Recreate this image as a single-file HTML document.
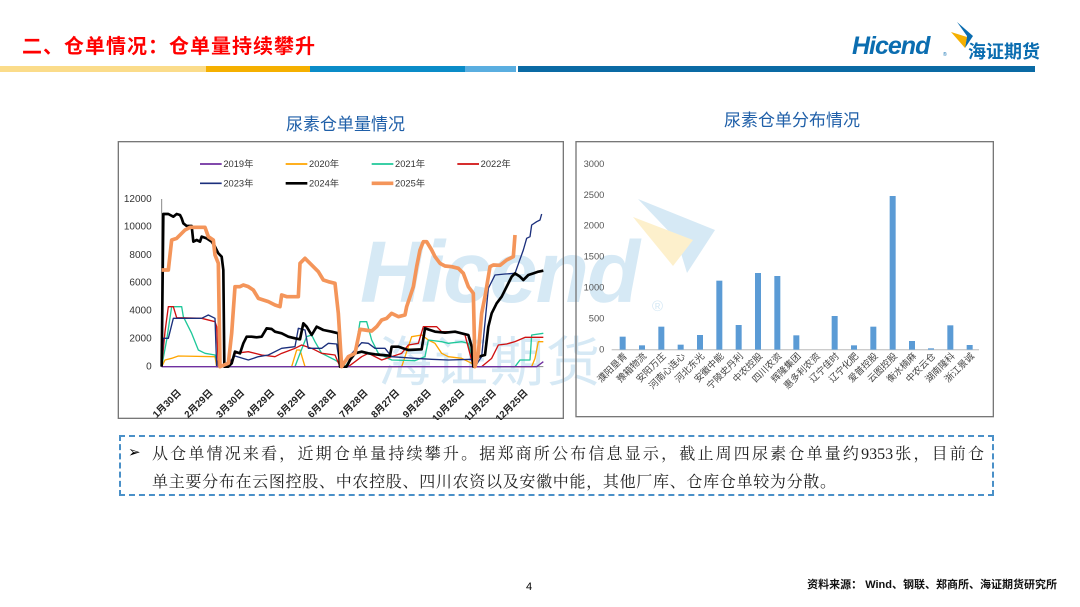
<!DOCTYPE html>
<html><head><meta charset="utf-8"><style>
body{margin:0;width:1080px;height:607px;position:relative;background:#fff;overflow:hidden;font-family:"Liberation Sans","Noto Sans CJK SC",sans-serif}
.abs{position:absolute}
</style></head><body>
<div class="abs" style="left:22px;top:30px;font-size:20px;font-weight:bold;color:#f00;letter-spacing:1px">二、仓单情况：仓单量持续攀升</div>
<!-- logo -->
<div class="abs" style="left:852px;top:32px;font-size:25px;font-weight:bold;font-style:italic;color:#0b6db0;letter-spacing:-1px">Hicend</div>
<div class="abs" style="left:943px;top:52px;font-size:5px;color:#0b6db0">®</div>
<svg class="abs" style="left:945px;top:22px" width="30" height="32"><polygon points="12,0 28,14 20,26 22,14" fill="#0b6db0"/><polygon points="6,10 22,15 20,26" fill="#f5b000"/></svg>
<div class="abs" style="left:968px;top:38px;font-size:18px;font-weight:bold;color:#0b6db0">海证期货</div>
<!-- stripe -->
<div class="abs" style="left:0;top:66px;width:206px;height:6px;background:#fbdc8a"></div>
<div class="abs" style="left:206px;top:66px;width:104px;height:6px;background:#f5b000"></div>
<div class="abs" style="left:310px;top:66px;width:155px;height:6px;background:#0a8cc8"></div>
<div class="abs" style="left:465px;top:66px;width:51px;height:6px;background:#5aaee0"></div>
<div class="abs" style="left:518px;top:66px;width:517px;height:6px;background:#0a6aa4"></div>
<!-- titles -->
<div class="abs" style="left:286px;top:110px;font-size:17px;color:#1f5fa8">尿素仓单量情况</div>
<div class="abs" style="left:724px;top:106px;font-size:17px;color:#1f5fa8">尿素仓单分布情况</div>
<!-- watermark -->
<div class="abs" style="left:360px;top:223px;font-size:87px;font-weight:bold;font-style:italic;color:#d6e9f5;letter-spacing:-2px">Hicend</div>
<div class="abs" style="left:652px;top:298px;font-size:15px;color:#d6e9f5">®</div>
<div class="abs" style="left:378px;top:318px;font-size:54px;color:#d6e9f5;letter-spacing:2px">海证期货</div>
<svg class="abs" style="left:625px;top:195px" width="100" height="90"><polygon points="13,4 90,35 62,78 52,45" fill="#d6e9f5"/><polygon points="8,22 68,45 48,71" fill="#fdf0cc"/></svg>
<!-- left chart -->
<svg class="abs" style="left:115px;top:140px" width="450" height="280" viewBox="0 0 1350 840">
<rect x="10" y="5" width="1335" height="830" fill="none" stroke="#777" stroke-width="4"/>
<g font-size="28" fill="#333" font-family="Liberation Sans,Noto Sans CJK SC,sans-serif">
<line x1="255" y1="72" x2="320" y2="72" stroke="#7030a0" stroke-width="5"/><text x="325" y="81">2019年</text>
<line x1="512" y1="72" x2="577" y2="72" stroke="#ffa500" stroke-width="5"/><text x="582" y="81">2020年</text>
<line x1="770" y1="72" x2="835" y2="72" stroke="#1fc89a" stroke-width="5"/><text x="840" y="81">2021年</text>
<line x1="1027" y1="72" x2="1092" y2="72" stroke="#d01010" stroke-width="5"/><text x="1097" y="81">2022年</text>
<line x1="255" y1="130" x2="320" y2="130" stroke="#1b2f7c" stroke-width="5"/><text x="325" y="139">2023年</text>
<line x1="512" y1="130" x2="577" y2="130" stroke="#000" stroke-width="8"/><text x="582" y="139">2024年</text>
<line x1="770" y1="130" x2="835" y2="130" stroke="#f4955a" stroke-width="11"/><text x="840" y="139">2025年</text>
<g text-anchor="end" font-size="30"><text x="110" y="186">12000</text><text x="110" y="269">10000</text><text x="110" y="354">8000</text><text x="110" y="437">6000</text><text x="110" y="521">4000</text><text x="110" y="605">2000</text><text x="110" y="689">0</text></g>
<g text-anchor="end" font-weight="bold" font-size="29" fill="#222">
<text transform="translate(200,760) rotate(-45)">1月30日</text><text transform="translate(295,760) rotate(-45)">2月29日</text><text transform="translate(390,760) rotate(-45)">3月30日</text><text transform="translate(480,760) rotate(-45)">4月29日</text><text transform="translate(573,760) rotate(-45)">5月29日</text><text transform="translate(665,760) rotate(-45)">6月28日</text><text transform="translate(760,760) rotate(-45)">7月28日</text><text transform="translate(855,760) rotate(-45)">8月27日</text><text transform="translate(950,760) rotate(-45)">9月26日</text><text transform="translate(1050,760) rotate(-45)">10月26日</text><text transform="translate(1145,760) rotate(-45)">11月25日</text><text transform="translate(1240,760) rotate(-45)">12月25日</text></g>
</g>
<line x1="140" y1="177" x2="140" y2="680" stroke="#888" stroke-width="3"/>
<line x1="140" y1="680" x2="1285" y2="680" stroke="#888" stroke-width="3"/>
<g fill="none" stroke-linejoin="round">
<polyline stroke="#ffa500" stroke-width="4" points="140,680 150,660 170,655 190,648 300,650 305,680 530,680 545,630 555,630 570,680 860,680 870,650 890,590 920,585 940,600 960,610 980,640 1000,650 1040,655 1070,670 1080,680 1250,680 1260,655 1270,605 1285,605"/>
<polyline stroke="#1fc89a" stroke-width="4" points="140,680 155,600 170,500 200,500 205,530 230,580 250,630 270,640 300,645 310,680 540,680 555,640 575,590 590,585 600,605 620,640 660,660 690,680 720,640 735,545 755,545 770,600 790,640 830,660 900,662 930,650 940,600 980,605 1000,610 1040,605 1060,610 1075,680 1200,680 1215,660 1245,660 1250,585 1285,580"/>
<polyline stroke="#d01010" stroke-width="4" points="140,680 150,575 160,500 175,500 185,533 260,535 300,545 305,560 310,680 340,680 360,640 400,635 440,645 480,650 500,640 540,625 560,615 590,625 620,640 660,645 675,680 700,680 740,650 760,640 800,660 830,650 860,640 880,615 910,610 925,560 965,560 980,575 1020,575 1050,585 1075,680 1100,680 1130,655 1150,615 1175,612 1200,605 1230,592 1285,592"/>
<polyline stroke="#1b2f7c" stroke-width="4" points="140,680 145,595 160,595 175,535 260,535 280,525 300,535 305,680 330,680 360,648 400,660 430,650 460,645 500,625 540,620 550,565 570,570 580,625 620,625 640,610 665,612 675,680 720,630 740,608 760,610 780,625 810,625 830,650 900,655 950,658 1000,660 1070,658 1080,680 1100,650 1120,445 1140,405 1170,402 1200,400 1215,358 1225,330 1235,295 1245,290 1250,255 1265,245 1275,240 1280,222"/>
<polyline stroke="#7030a0" stroke-width="4" points="140,680 1265,680 1285,665"/>
<polyline stroke="#000" stroke-width="8" points="140,680 145,222 160,222 175,230 185,222 195,225 200,235 205,250 215,258 230,258 235,305 245,300 255,305 260,290 275,295 290,305 300,320 310,340 320,350 325,390 328,680 340,680 350,670 360,635 375,640 385,610 395,590 410,590 425,592 440,590 455,565 470,567 480,575 500,580 520,590 540,595 555,598 565,550 575,560 590,585 605,560 625,570 650,575 670,580 675,680 695,680 705,660 720,640 740,635 760,640 780,643 800,645 825,647 830,620 850,620 870,627 880,630 920,628 930,565 945,570 960,575 990,578 1020,575 1060,585 1070,620 1075,680 1090,650 1110,645 1120,560 1130,520 1145,490 1160,470 1175,440 1190,410 1200,400 1215,410 1225,420 1240,405 1255,400 1270,395 1285,392"/>
<polyline stroke="#f4955a" stroke-width="11" points="140,390 160,390 170,300 185,295 195,285 210,270 225,262 245,262 270,262 280,290 295,300 300,345 310,370 315,680 340,670 350,580 360,440 375,440 385,435 400,440 415,450 430,475 445,480 460,485 480,495 495,500 500,465 515,470 530,470 550,470 555,370 570,355 580,365 595,380 610,395 625,420 640,425 660,430 670,520 680,680 700,650 720,640 735,568 750,570 770,573 785,560 800,540 815,535 830,520 850,530 870,525 875,500 885,470 895,440 905,380 915,330 925,305 935,305 950,330 960,350 975,370 990,378 1010,380 1030,385 1045,400 1060,440 1075,460 1080,680 1090,640 1100,520 1110,470 1125,380 1135,375 1155,376 1175,360 1185,355 1195,350 1200,285"/>
</g>
</svg>
<!-- right chart -->
<svg class="abs" style="left:575px;top:140px" width="420" height="280" viewBox="0 0 1260 840">
<rect x="3" y="5" width="1252" height="825" fill="none" stroke="#777" stroke-width="4"/>
<g font-size="28" fill="#555" text-anchor="end" font-family="Liberation Sans,sans-serif">
<text x="88" y="81">3000</text><text x="88" y="174">2500</text><text x="88" y="266">2000</text><text x="88" y="359">1500</text><text x="88" y="452">1000</text><text x="88" y="544">500</text><text x="88" y="637">0</text></g>
<line x1="110" y1="629" x2="1212" y2="629" stroke="#ccc" stroke-width="4"/>
<g fill="#5b9bd5">
<rect x="134" y="590" width="18" height="39"/><rect x="192" y="616" width="18" height="13"/><rect x="250" y="560" width="18" height="69"/><rect x="308" y="614" width="18" height="15"/><rect x="366" y="585" width="18" height="44"/><rect x="424" y="422" width="18" height="207"/><rect x="482" y="555" width="18" height="74"/><rect x="540" y="399" width="18" height="230"/><rect x="598" y="408" width="18" height="221"/><rect x="655" y="586" width="18" height="43"/><rect x="770" y="528" width="18" height="101"/><rect x="828" y="616" width="18" height="13"/><rect x="886" y="560" width="18" height="69"/><rect x="944" y="168" width="18" height="461"/><rect x="1002" y="603" width="18" height="26"/><rect x="1059" y="625" width="18" height="4"/><rect x="1117" y="556" width="18" height="73"/><rect x="1175" y="615" width="18" height="14"/></g>
<g font-size="28" fill="#444" text-anchor="end" font-family="Liberation Sans,Noto Sans CJK SC,sans-serif">
<text transform="translate(158,650) rotate(-45)">濮阳垦青</text><text transform="translate(216,650) rotate(-45)">豫箱物流</text><text transform="translate(274,650) rotate(-45)">安阳万庄</text><text transform="translate(332,650) rotate(-45)">河南心连心</text><text transform="translate(390,650) rotate(-45)">河北东光</text><text transform="translate(448,650) rotate(-45)">安徽中能</text><text transform="translate(506,650) rotate(-45)">宁陵史丹利</text><text transform="translate(564,650) rotate(-45)">中农控股</text><text transform="translate(622,650) rotate(-45)">四川农资</text><text transform="translate(679,650) rotate(-45)">辉隆集团</text><text transform="translate(737,650) rotate(-45)">惠多利农资</text><text transform="translate(794,650) rotate(-45)">辽宁佳时</text><text transform="translate(852,650) rotate(-45)">辽宁化肥</text><text transform="translate(910,650) rotate(-45)">爱普控股</text><text transform="translate(968,650) rotate(-45)">云图控股</text><text transform="translate(1026,650) rotate(-45)">衡水楠麻</text><text transform="translate(1083,650) rotate(-45)">中农云仓</text><text transform="translate(1141,650) rotate(-45)">湖南隆科</text><text transform="translate(1199,650) rotate(-45)">浙江景诚</text></g>
</svg>
<!-- text box -->
<div class="abs" style="left:119px;top:435px;width:871px;height:57px;border:2px dashed #4a90c8"></div>
<div class="abs" style="left:128px;top:443px;font-size:15px">➢</div>
<div class="abs" style="left:152px;top:441px;width:832px;font-size:16px;color:#222;text-align:justify;text-align-last:justify;font-family:'Liberation Serif','Noto Serif CJK SC',serif">从仓单情况来看，近期仓单量持续攀升。据郑商所公布信息显示，截止周四尿素仓单量约9353张，目前仓</div>
<div class="abs" style="left:152px;top:469px;font-size:16px;letter-spacing:0.7px;color:#222;font-family:'Liberation Serif','Noto Serif CJK SC',serif">单主要分布在云图控股、中农控股、四川农资以及安徽中能，其他厂库、仓库仓单较为分散。</div>
<div class="abs" style="left:526px;top:581px;font-size:11px">4</div>
<div class="abs" style="right:23px;top:576px;font-size:11px;font-weight:bold;color:#111">资料来源： Wind、钢联、郑商所、海证期货研究所</div>
</body></html>
